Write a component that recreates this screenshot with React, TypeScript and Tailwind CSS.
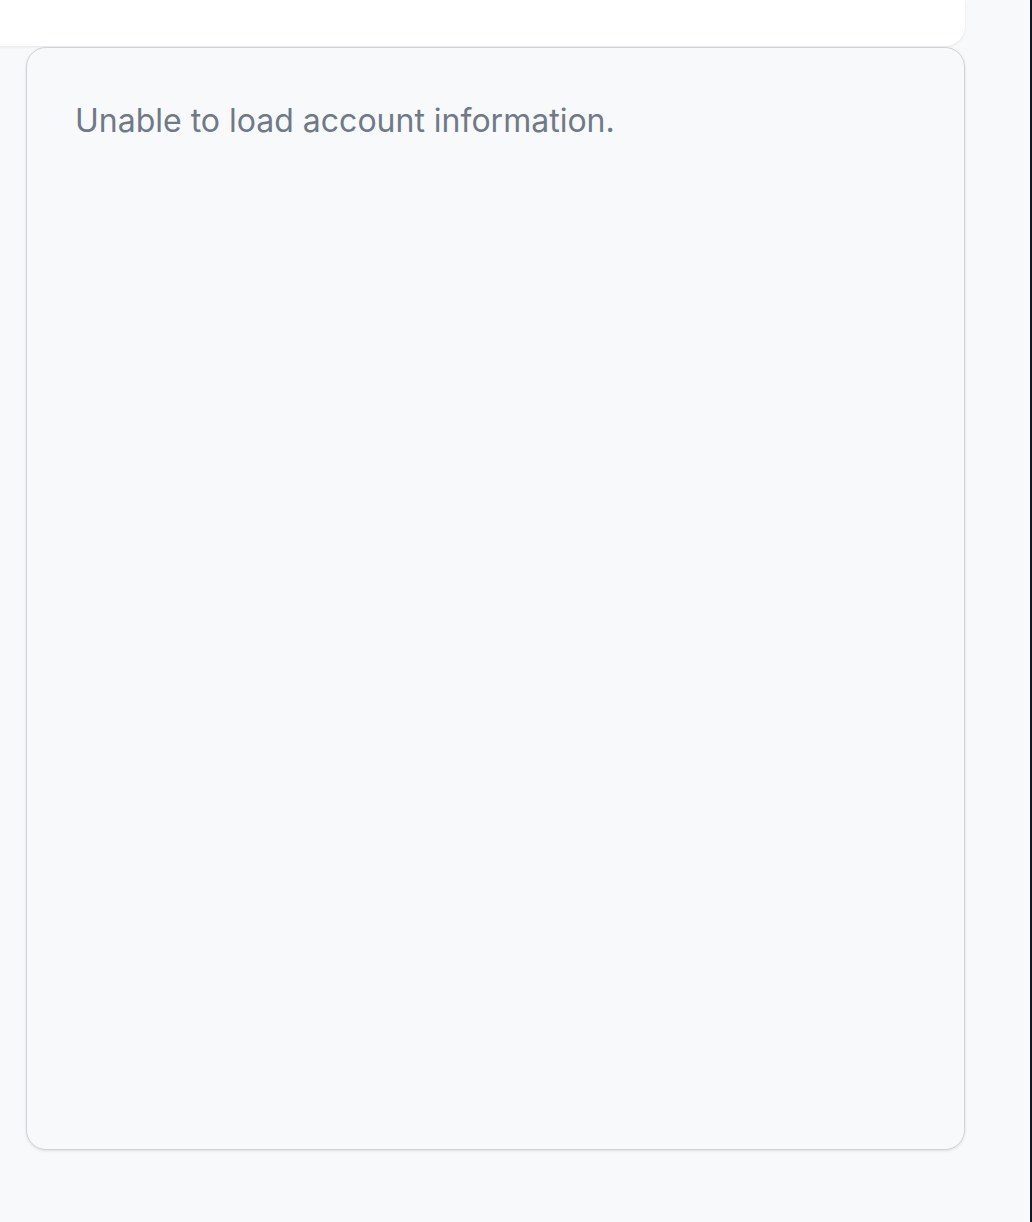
export default function App() {
  return (
    <div className="flex h-[1222px] w-full overflow-hidden bg-[#f8f9fb]" style={{ fontFamily: 'Inter, "Noto Sans", sans-serif' }}>
      <div className="flex min-w-0 flex-1 flex-col">
        <div className="-ml-[40px] mr-[65px] h-[46px] shrink-0 rounded-b-[20px] bg-white shadow-[0_1px_3px_rgba(0,0,0,0.08)]" />
        <div className="ml-[26px] mr-[65px] mt-px h-[1103px] shrink-0 rounded-[20px] border border-[#cfd3d9] bg-[#f8f9fb] px-12 pb-12 pt-[50px] shadow-[0_1px_3px_rgba(0,0,0,0.1)]">
          <p className="text-[32px] leading-[45px] text-[#707987]">Unable to load account information.</p>
        </div>
      </div>
      <div className="w-[2px] shrink-0 bg-[#111827]" />
    </div>
  );
}
